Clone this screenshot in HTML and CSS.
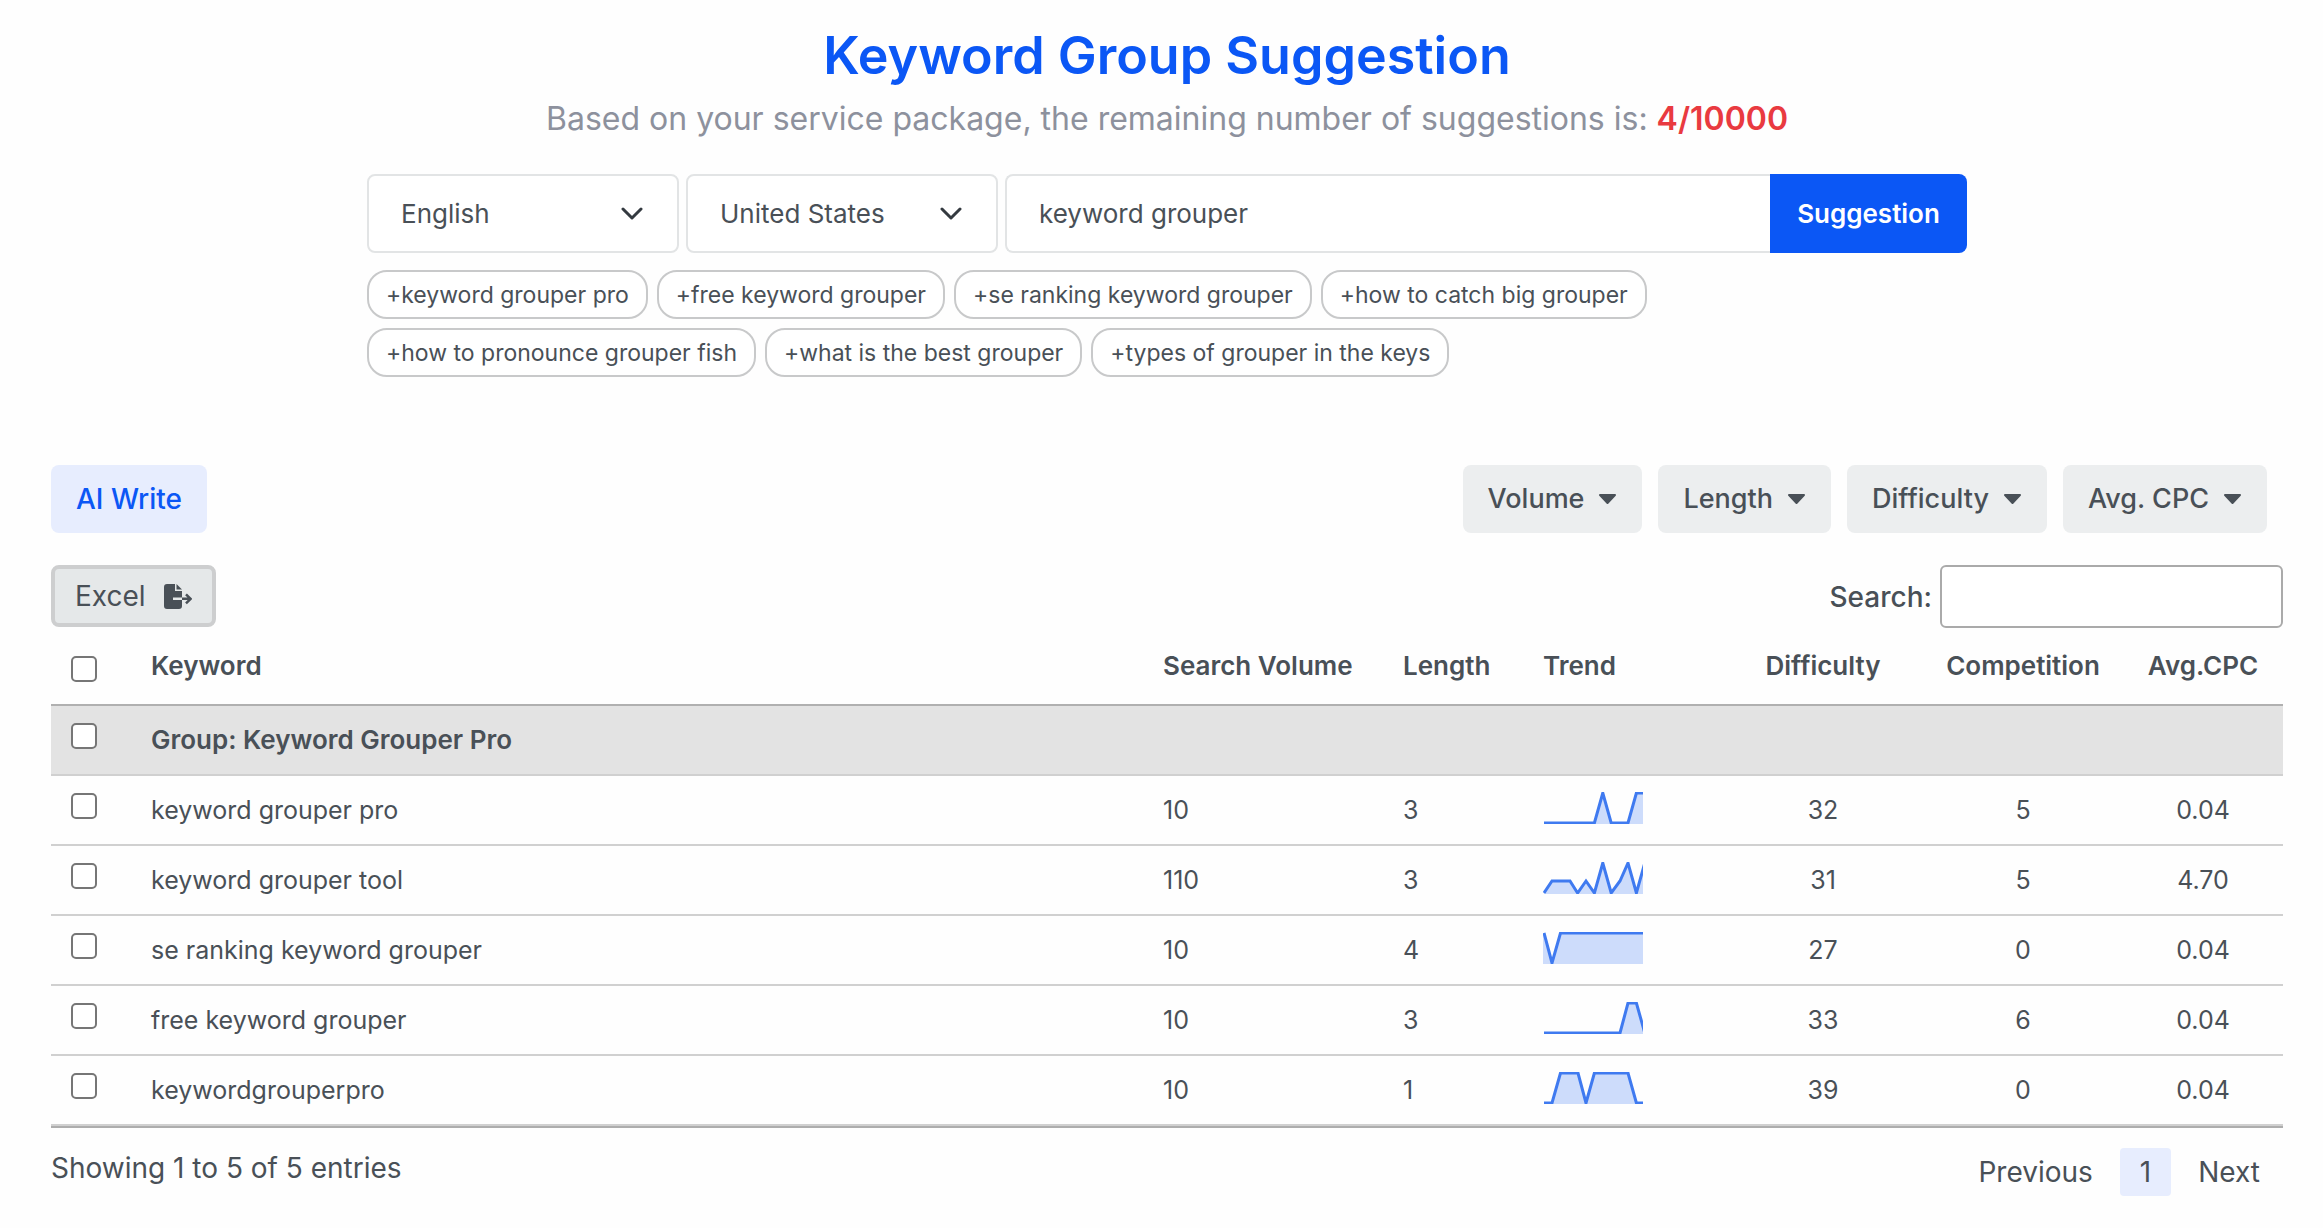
FILE: index.html
```
<!DOCTYPE html>
<html lang="en">
<head>
    <meta charset="utf-8">
    <title>Keyword Group Suggestion</title>
    <link rel="stylesheet" href="styles.css">
</head>
<body>
    <header class="finder">
        <h1>Keyword Group Suggestion</h1>
        <p class="quota">Based on your service package, the remaining number of suggestions is: <strong>4/10000</strong></p>

        <form class="finder-form">
            <div class="select">
                <select aria-label="Language">
                    <option>English</option>
                </select>
                <svg width="22" height="13" viewBox="0 0 22 13"><path d="M2 2l9 9 9-9"/></svg>
            </div>
            <div class="select">
                <select aria-label="Country">
                    <option>United States</option>
                </select>
                <svg width="22" height="13" viewBox="0 0 22 13"><path d="M2 2l9 9 9-9"/></svg>
            </div>
            <div class="query">
                <input type="text" aria-label="Keyword" value="keyword grouper">
                <button type="button">Suggestion</button>
            </div>
        </form>

        <div class="chips">
            <button type="button">+keyword grouper pro</button>
            <button type="button">+free keyword grouper</button>
            <button type="button">+se ranking keyword grouper</button>
            <button type="button">+how to catch big grouper</button>
            <button type="button">+how to pronounce grouper fish</button>
            <button type="button">+what is the best grouper</button>
            <button type="button">+types of grouper in the keys</button>
        </div>
    </header>

    <main>
        <div class="toolbar">
            <button type="button" class="btn btn-primary">AI Write</button>
            <div class="filters">
                <button type="button" class="btn">Volume <svg width="19" height="12" viewBox="0 0 19 12"><path d="M2 2h15L9.500 10z"/></svg></button>
                <button type="button" class="btn">Length <svg width="19" height="12" viewBox="0 0 19 12"><path d="M2 2h15L9.500 10z"/></svg></button>
                <button type="button" class="btn">Difficulty <svg width="19" height="12" viewBox="0 0 19 12"><path d="M2 2h15L9.500 10z"/></svg></button>
                <button type="button" class="btn">Avg. CPC <svg width="19" height="12" viewBox="0 0 19 12"><path d="M2 2h15L9.500 10z"/></svg></button>
            </div>
        </div>

        <div class="table-top">
            <button type="button" class="excel">
                Excel
                <svg width="28" height="25" viewBox="0 0 28 25">
                    <path d="M3 0h8v7h7v6.500H9v2.500h9v6a3 3 0 0 1-3 3H3a3 3 0 0 1-3-3V3a3 3 0 0 1 3-3z"/>
                    <path d="M12.500 0l5.500 5.500h-5.500z"/>
                    <path class="arrow" d="M18 14.800h8.500M22 10.300l4.600 4.500-4.600 4.500"/>
                </svg>
            </button>
            <div class="search">
                <label for="tableSearch">Search:</label>
                <input type="search" id="tableSearch">
            </div>
        </div>

        <table>
            <thead>
                <tr>
                    <th class="check"><input type="checkbox" aria-label="Select all"></th>
                    <th>Keyword</th>
                    <th class="volume">Search Volume</th>
                    <th class="length">Length</th>
                    <th class="trend">Trend</th>
                    <th class="num">Difficulty</th>
                    <th class="num">Competition</th>
                    <th class="num cpc">Avg.CPC</th>
                </tr>
            </thead>
            <tbody>
                <tr class="group">
                    <td class="check"><input type="checkbox" aria-label="Select group"></td>
                    <td colspan="7">Group: Keyword Grouper Pro</td>
                </tr>
                <tr>
                    <td class="check"><input type="checkbox" aria-label="keyword grouper pro"></td>
                    <td>keyword grouper pro</td>
                    <td>10</td>
                    <td>3</td>
                    <td class="trend">
                        <svg width="100" height="32" viewBox="0 0 100 32">
                            <path class="area" d="M1 31H51.400L59.800 1 68.200 31H85L93.400 1H101.800V32H1z"/>
                            <path class="line" d="M1 31H51.400L59.800 1 68.200 31H85L93.400 1H101.800"/>
                        </svg>
                    </td>
                    <td class="num">32</td>
                    <td class="num">5</td>
                    <td class="num">0.04</td>
                </tr>
                <tr>
                    <td class="check"><input type="checkbox" aria-label="keyword grouper tool"></td>
                    <td>keyword grouper tool</td>
                    <td>110</td>
                    <td>3</td>
                    <td class="trend">
                        <svg width="100" height="32" viewBox="0 0 100 32">
                            <path class="area" d="M1 31L9 19H27L34.600 31 43 19 51.400 31 59.800 1 68.200 31 77 19 85 1 93.400 31 101.800 1V32H1z"/>
                            <path class="line" d="M1 31L9 19H27L34.600 31 43 19 51.400 31 59.800 1 68.200 31 77 19 85 1 93.400 31 101.800 1"/>
                        </svg>
                    </td>
                    <td class="num">31</td>
                    <td class="num">5</td>
                    <td class="num">4.70</td>
                </tr>
                <tr>
                    <td class="check"><input type="checkbox" aria-label="se ranking keyword grouper"></td>
                    <td>se ranking keyword grouper</td>
                    <td>10</td>
                    <td>4</td>
                    <td class="trend">
                        <svg width="100" height="32" viewBox="0 0 100 32">
                            <path class="area" d="M1 1L9 31 17.500 1H101.800V32H0V1z"/>
                            <path class="line" d="M1 1L9 31 17.500 1H101.800"/>
                        </svg>
                    </td>
                    <td class="num">27</td>
                    <td class="num">0</td>
                    <td class="num">0.04</td>
                </tr>
                <tr>
                    <td class="check"><input type="checkbox" aria-label="free keyword grouper"></td>
                    <td>free keyword grouper</td>
                    <td>10</td>
                    <td>3</td>
                    <td class="trend">
                        <svg width="100" height="32" viewBox="0 0 100 32">
                            <path class="area" d="M1 31H77L85 1H93.400L101.800 31V32H1z"/>
                            <path class="line" d="M1 31H77L85 1H93.400L101.800 31"/>
                        </svg>
                    </td>
                    <td class="num">33</td>
                    <td class="num">6</td>
                    <td class="num">0.04</td>
                </tr>
                <tr>
                    <td class="check"><input type="checkbox" aria-label="keywordgrouperpro"></td>
                    <td>keywordgrouperpro</td>
                    <td>10</td>
                    <td>1</td>
                    <td class="trend">
                        <svg width="100" height="32" viewBox="0 0 100 32">
                            <path class="area" d="M1 31H9L17.500 1H35L43 31 51.400 1H85L93.400 31H101.800V32H1z"/>
                            <path class="line" d="M1 31H9L17.500 1H35L43 31 51.400 1H85L93.400 31H101.800"/>
                        </svg>
                    </td>
                    <td class="num">39</td>
                    <td class="num">0</td>
                    <td class="num">0.04</td>
                </tr>
            </tbody>
        </table>

        <footer class="table-bottom">
            <div>Showing 1 to 5 of 5 entries</div>
            <nav class="pages">
                <a href="#">Previous</a>
                <a href="#" class="current">1</a>
                <a href="#">Next</a>
            </nav>
        </footer>
    </main>
</body>
</html>
```
FILE: styles.css
```
* {
    box-sizing: border-box;
}

body {
    margin: 0;
    padding: 24px 40px 24px 51px;
    background: #fefefe;
    color: #495057;
    font-family: Inter, "Liberation Sans", sans-serif;
    font-size: 25px;
    line-height: 36px;
}

button, input, select {
    font: inherit;
    color: inherit;
}

button {
    cursor: pointer;
}

.finder {
    max-width: 1600px;
    margin: 0 auto;
}

h1 {
    margin: 0;
    color: #0b57f5;
    font-size: 52px;
    font-weight: 600;
    line-height: 64px;
    text-align: center;
}

.quota {
    margin: 9px 0 33px;
    color: #8d919d;
    font-size: 32px;
    line-height: 44px;
    text-align: center;
}

.quota strong {
    color: #e93a40;
    font-weight: 600;
}

.finder-form {
    display: flex;
    gap: 7px;
    font-size: 26px;
}

.select {
    display: grid;
    width: 312px;
    align-items: center;
}

.select select,
.select svg {
    grid-area: 1 / 1;
}

.select select {
    appearance: none;
    height: 79px;
    padding: 0 64px 0 32px;
    border: 2px solid #e2e4e5;
    border-radius: 8px;
    background: #fff;
}

.select svg {
    justify-self: end;
    margin-right: 36px;
    fill: none;
    stroke: #343a40;
    stroke-width: 3;
    stroke-linecap: round;
    stroke-linejoin: round;
    pointer-events: none;
}

.query {
    display: flex;
    flex: 1;
}

.query input {
    flex: 1;
    min-width: 0;
    padding: 0 32px;
    border: 2px solid #e2e4e5;
    border-right: 0;
    border-radius: 8px 0 0 8px;
    background: #fff;
}

.query button {
    width: 197px;
    border: 0;
    border-radius: 0 8px 8px 0;
    background: #0b57f5;
    color: #fff;
    font-weight: 600;
}

.chips {
    display: flex;
    flex-wrap: wrap;
    gap: 9px;
    max-width: 1320px;
    margin-top: 17px;
    font-size: 23px;
}

.chips button {
    height: 49px;
    padding: 0 17px;
    border: 2px solid #c8c9ca;
    border-radius: 20px;
    background: #fff;
}

.toolbar {
    display: flex;
    justify-content: space-between;
    margin-top: 88px;
    padding-right: 16px;
}

.filters {
    display: flex;
    gap: 16px;
}

.btn {
    display: flex;
    align-items: center;
    gap: 14px;
    height: 68px;
    padding: 0 25px;
    border: 0;
    border-radius: 8px;
    background: #eceeef;
    font-size: 27px;
    font-weight: 500;
}

.btn-primary {
    background: #e7edfe;
    color: #0b57f5;
    font-size: 28px;
}

.btn svg {
    fill: #495057;
    stroke: #495057;
    stroke-width: 2;
    stroke-linejoin: round;
}

.table-top {
    display: flex;
    justify-content: space-between;
    margin-top: 32px;
}

.excel {
    display: flex;
    align-items: center;
    gap: 18px;
    height: 62px;
    padding: 0 20px;
    border: 4px solid #cdcecf;
    border-radius: 8px;
    background: #e5e8e9;
    font-size: 28px;
}

.excel svg {
    fill: #495057;
}

.excel .arrow {
    fill: none;
    stroke: #495057;
    stroke-width: 2.500;
}

.search {
    display: flex;
    align-items: center;
    gap: 8px;
    font-size: 28px;
    font-weight: 500;
}

.search input {
    width: 343px;
    height: 63px;
    padding: 0 16px;
    border: 2px solid #aaa;
    border-radius: 6px;
    background: #fff;
}

table {
    width: 100%;
    border-spacing: 0;
    border-bottom: 2px solid #adadad;
}

th, td {
    padding: 16px 20px;
    border-bottom: 2px solid #d0d0d0;
    text-align: left;
}

th {
    padding: 20px;
    border-bottom-color: #b0b0b0;
    font-size: 26px;
    font-weight: 600;
    white-space: nowrap;
}

.check {
    width: 80px;
    padding-top: 17px;
    vertical-align: top;
}

th.check {
    padding-bottom: 22px;
    vertical-align: bottom;
}

.check input {
    appearance: none;
    display: block;
    width: 26px;
    height: 26px;
    margin: 0;
    border: 2px solid #767676;
    border-radius: 5px;
    background: #fff;
}

.check input:checked {
    background: #0b57f5;
}

.volume {
    width: 240px;
}

.length {
    width: 140px;
}

.trend {
    width: 200px;
}

th.num {
    width: 200px;
}

th.cpc {
    width: 160px;
}

.num {
    text-align: center;
}

.group td {
    background: #e3e3e3;
    font-size: 26px;
    font-weight: 600;
}

td.trend {
    vertical-align: top;
}

.trend svg {
    display: block;
}

.trend .area {
    fill: #cddcfb;
}

.trend .line {
    fill: none;
    stroke: #3f7af0;
    stroke-width: 3;
}

.table-bottom {
    display: flex;
    justify-content: space-between;
    padding-top: 20px;
    font-size: 28px;
    line-height: 40px;
}

.pages {
    display: flex;
    gap: 4px;
}

.pages a {
    padding: 4px 23px;
    border-radius: 4px;
    color: inherit;
    text-decoration: none;
}

.pages .current {
    padding: 4px 20px;
    background: #e7edfe;
}
```
